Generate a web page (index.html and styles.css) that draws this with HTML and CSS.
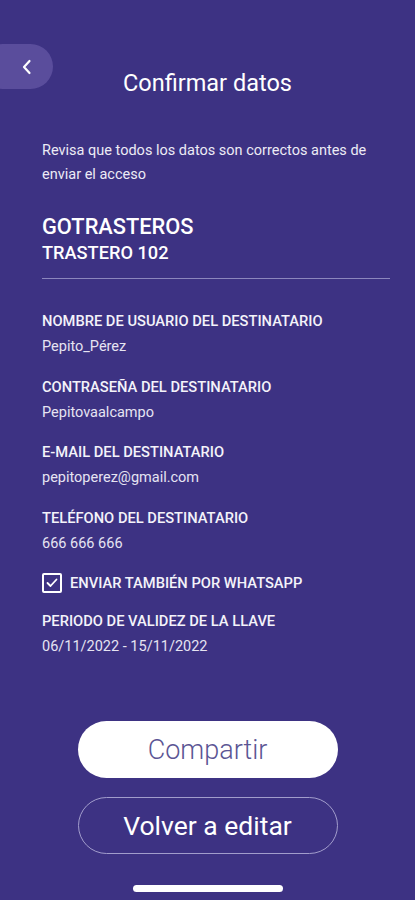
FILE: index.html
```html
<!DOCTYPE html>
<html lang="es">

<head>
  <meta charset="UTF-8">
  <title>Confirmar datos</title>
  <link rel="stylesheet" href="styles.css">
</head>

<body>
  <div class="screen">
    <header class="top">
      <button class="back" aria-label="Volver">
        <svg width="12" height="16" viewBox="0 0 12 16">
          <path d="M8.5 2 L3 8 L8.5 14" fill="none" stroke="#fff" stroke-width="2.2" stroke-linecap="round" stroke-linejoin="round"/>
        </svg>
      </button>
      <h1 class="title">Confirmar datos</h1>
    </header>

    <p class="intro">Revisa que todos los datos son correctos antes de enviar el acceso</p>

    <div class="place">
      <div class="place-name">GOTRASTEROS</div>
      <div class="place-unit">TRASTERO 102</div>
    </div>

    <hr class="divider">

    <div class="fields">
      <div class="field">
        <div class="label">NOMBRE DE USUARIO DEL DESTINATARIO</div>
        <div class="value">Pepito_Pérez</div>
      </div>
      <div class="field">
        <div class="label">CONTRASEÑA DEL DESTINATARIO</div>
        <div class="value">Pepitovaalcampo</div>
      </div>
      <div class="field">
        <div class="label">E-MAIL DEL DESTINATARIO</div>
        <div class="value">pepitoperez@gmail.com</div>
      </div>
      <div class="field">
        <div class="label">TELÉFONO DEL DESTINATARIO</div>
        <div class="value">666 666 666</div>
      </div>
      <label class="check">
        <span class="box">
          <svg width="12" height="10" viewBox="0 0 12 10">
            <path d="M1.5 5 L4.5 8 L10.5 1.5" fill="none" stroke="#fff" stroke-width="1.8" stroke-linecap="round" stroke-linejoin="round"/>
          </svg>
        </span>
        <span class="label">ENVIAR TAMBIÉN POR WHATSAPP</span>
      </label>
      <div class="field">
        <div class="label">PERIODO DE VALIDEZ DE LA LLAVE</div>
        <div class="value">06/11/2022 - 15/11/2022</div>
      </div>
    </div>

    <div class="actions">
      <button class="btn btn-primary">Compartir</button>
      <button class="btn btn-outline">Volver a editar</button>
      <div class="home-bar"></div>
    </div>
  </div>
</body>

</html>
```

FILE: styles.css
```css
* {
  box-sizing: border-box;
}
body {
  margin: 0;
  background: #3d3283;
  font-family: Roboto, "Noto Sans", sans-serif;
  color: #fff;
}
.screen {
  width: 415px;
  height: 900px;
  display: flex;
  flex-direction: column;
  overflow: hidden;
}
.top {
  position: relative;
  padding-top: 70px;
}
.back {
  position: absolute;
  left: -20px;
  top: 44px;
  width: 73px;
  height: 45px;
  border: 0;
  border-radius: 23px;
  background: #5a4d9c;
  padding: 0 0 0 20px;
  display: flex;
  align-items: center;
  justify-content: center;
}
.title {
  margin: 0;
  text-align: center;
  font-size: 23.5px;
  line-height: 26px;
  font-weight: 400;
  color: #fff;
}
.intro {
  margin: 43px 0 0;
  padding: 0 36px 0 42px;
  font-size: 14.5px;
  line-height: 24px;
  color: #ecebf5;
}
.place {
  margin-top: 27px;
  padding-left: 42px;
  font-weight: 500;
}
.place-name {
  font-size: 21.8px;
  line-height: 26px;
}
.place-unit {
  font-size: 18.2px;
  line-height: 26px;
}
.divider {
  margin: 12px 25px 0 42px;
  border: 0;
  height: 1px;
  background: #8c86bd;
}
.fields {
  margin-top: 32px;
  padding-left: 42px;
  display: flex;
  flex-direction: column;
  gap: 19.5px;
}
.label {
  font-size: 14.7px;
  line-height: 20px;
  font-weight: 500;
  color: #f4f3fa;
}
.value {
  margin-top: 6px;
  font-size: 14.5px;
  line-height: 20px;
  color: #e6e4f2;
}
.check {
  display: flex;
  align-items: center;
  gap: 8px;
  margin-bottom: -2px;
}
.box {
  width: 20px;
  height: 20px;
  border: 2px solid #fff;
  border-radius: 2px;
  display: flex;
  align-items: center;
  justify-content: center;
}
.actions {
  margin-top: auto;
  padding-bottom: 8px;
  display: flex;
  flex-direction: column;
  align-items: center;
}
.btn {
  width: 260px;
  height: 57px;
  border-radius: 29px;
  font-family: Roboto, "Noto Sans", sans-serif;
  cursor: pointer;
}
.btn-primary {
  border: 0;
  background: #fff;
  color: #5b5594;
  font-size: 27px;
  font-weight: 300;
}
.btn-outline {
  margin-top: 19px;
  border: 1px solid #a29dcc;
  background: transparent;
  color: #fff;
  font-size: 26.5px;
  font-weight: 400;
}
.home-bar {
  margin-top: 31px;
  width: 150px;
  height: 7px;
  border-radius: 4px;
  background: #fff;
}
```
